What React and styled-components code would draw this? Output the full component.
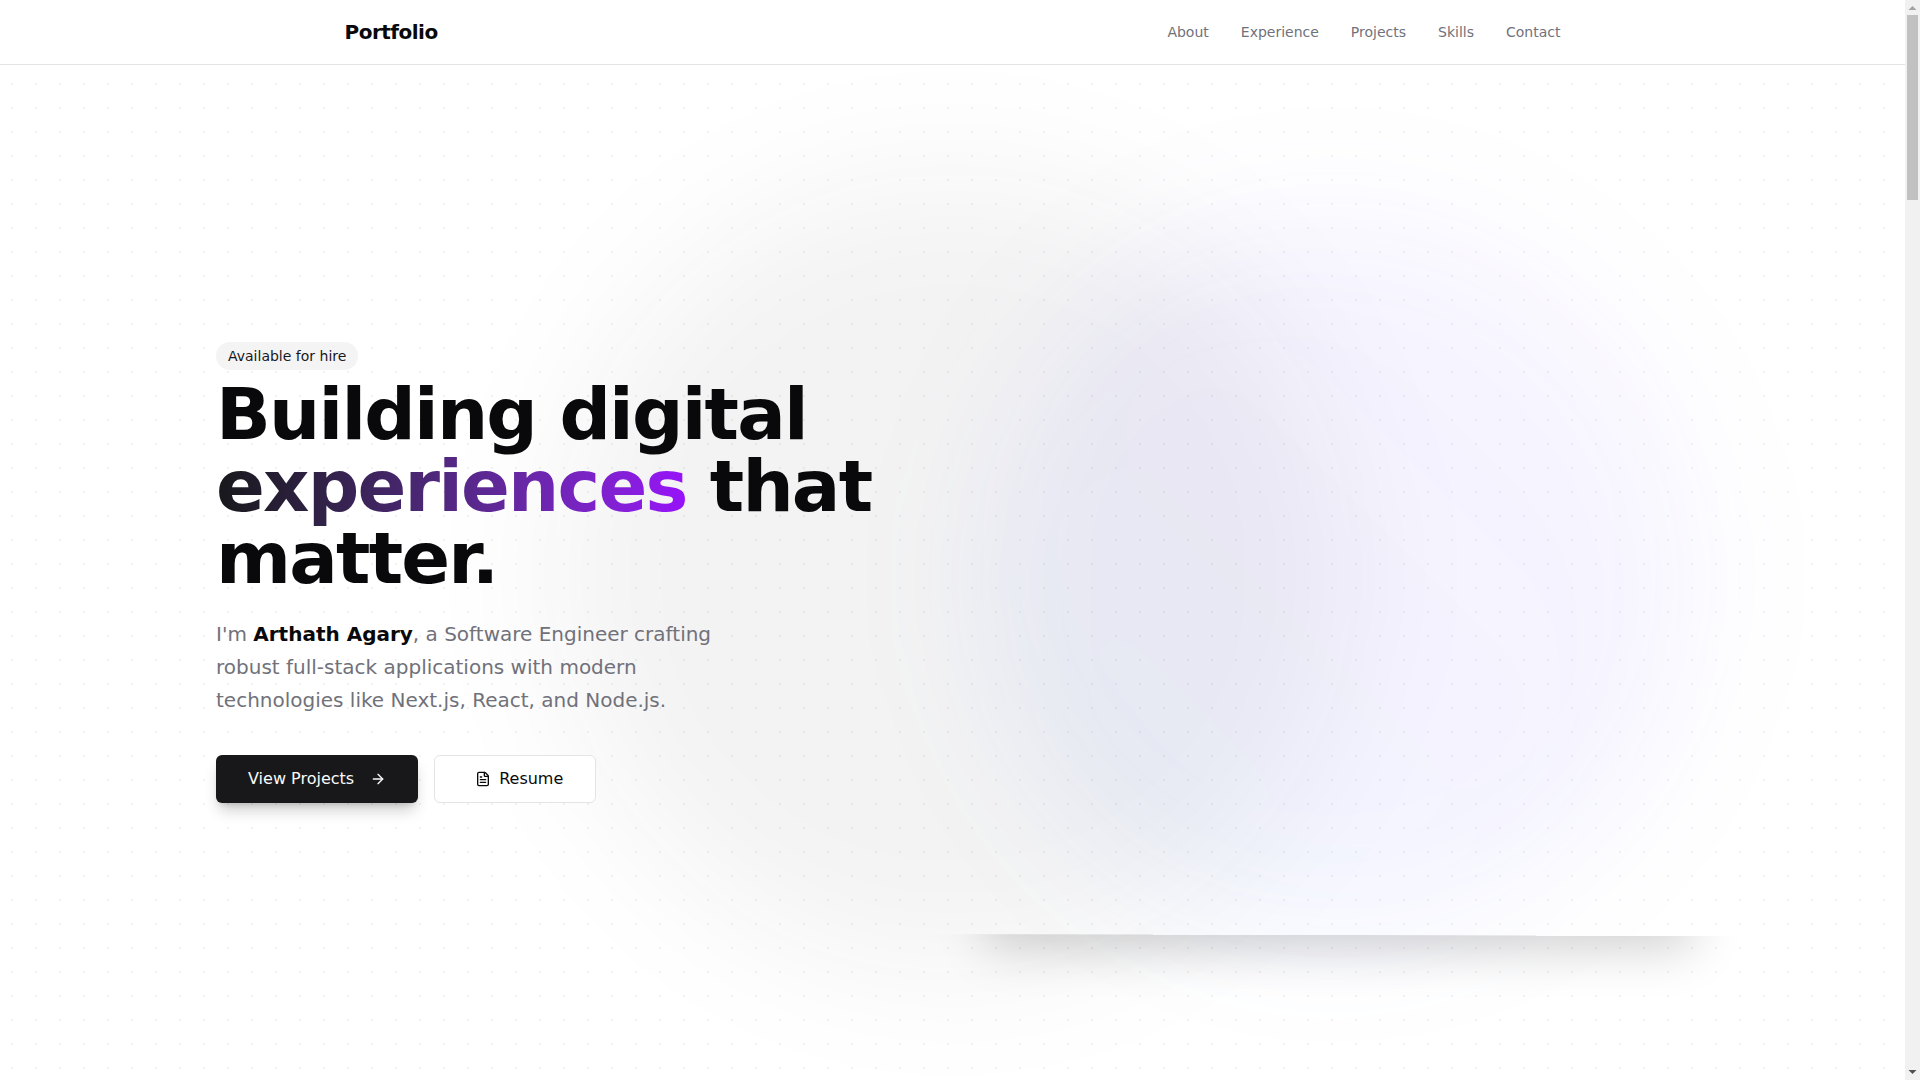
import styled, { createGlobalStyle } from "styled-components";
import { ArrowRight, FileText } from "lucide-react";

const GlobalStyle = createGlobalStyle`
  * {
    box-sizing: border-box;
  }

  body {
    margin: 0;
    background-color: #ffffff;
    color: #09090b;
    font-family: "DejaVu Sans", sans-serif;
    font-size: 16px;
    line-height: 24px;
  }
`;

const Page = styled.div`
  display: flex;
  height: 100vh;
`;

const Content = styled.div`
  position: relative;
  display: flex;
  flex: 1;
  flex-direction: column;
  min-width: 0;
  overflow: hidden;
`;

// dotted backdrop, it also runs behind the header
const Dots = styled.div`
  position: absolute;
  inset: 0;
  background-image: radial-gradient(#e4e4e7 1px, transparent 1px);
  background-size: 24px 24px;
  opacity: 0.5;
`;

const Header = styled.header`
  position: relative;
  z-index: 2;
  border-bottom: 1px solid #e4e4e7;
  background-color: #ffffff;
`;

const HeaderInner = styled.div`
  display: flex;
  align-items: center;
  justify-content: space-between;
  max-width: 1280px;
  height: 64px;
  margin: 0 auto;
  padding: 0 32px;
`;

const Brand = styled.a`
  color: #09090b;
  font-size: 20px;
  font-weight: bold;
  letter-spacing: -0.5px;
  line-height: 28px;
  text-decoration: none;
`;

const Nav = styled.nav`
  display: flex;
  gap: 32px;
`;

const NavLink = styled.a`
  color: #71717a;
  font-size: 14px;
  line-height: 20px;
  text-decoration: none;
`;

const Hero = styled.main`
  position: relative;
  display: flex;
  flex: 1;
  align-items: center;
`;

const Glow = styled.div`
  position: absolute;
  top: 50%;
  left: ${(props) => props.$left};
  width: ${(props) => props.$size}px;
  height: ${(props) => props.$size}px;
  border-radius: 50%;
  background: ${(props) => props.$fill};
  filter: blur(64px);
  transform: translate(-50%, -50%);
`;

const HeroGrid = styled.div`
  position: relative;
  display: grid;
  grid-template-columns: 1fr 1fr;
  gap: 48px;
  align-items: center;
  width: 100%;
  max-width: 1537px;
  margin: 0 auto;
  padding: 0 32px;
`;

const Intro = styled.div`
  display: flex;
  flex-direction: column;
  align-items: flex-start;
`;

const Badge = styled.span`
  padding: 4px 12px;
  border-radius: 14px;
  background-color: #f4f4f5;
  color: #18181b;
  font-size: 14px;
  line-height: 20px;
`;

const Title = styled.h1`
  margin: 8px 0 24px;
  font-size: 72px;
  font-weight: bold;
  letter-spacing: -1.8px;
  line-height: 72px;
`;

const Highlight = styled.span`
  background-image: linear-gradient(to right in oklab, #18181b, #9810fa);
  background-clip: text;
  color: transparent;
`;

const Lead = styled.p`
  max-width: 512px;
  margin: 0 0 38px;
  color: #71717a;
  font-size: 20px;
  line-height: 33px;

  strong {
    color: #09090b;
  }
`;

const Actions = styled.div`
  display: flex;
  gap: 16px;
`;

const Button = styled.button`
  display: flex;
  align-items: center;
  justify-content: center;
  gap: 8px;
  height: 48px;
  padding: 0 32px;
  border: ${(props) => (props.$primary ? "none" : "1px solid #e4e4e7")};
  border-radius: 6px;
  background-color: ${(props) => (props.$primary ? "#18181b" : "#ffffff")};
  color: ${(props) => (props.$primary ? "#fafafa" : "#09090b")};
  box-shadow: ${(props) =>
    props.$primary
      ? "0 10px 15px -3px rgba(0, 0, 0, 0.2), 0 4px 6px -4px rgba(0, 0, 0, 0.2)"
      : "none"};
  font-family: inherit;
  font-size: 16px;
  line-height: 24px;
  cursor: pointer;

  svg {
    width: 16px;
    height: 16px;
    margin-left: 8px;
  }
`;

const Stage = styled.div`
  align-self: stretch;
`;

// strip below the stage that keeps only the lower half of the shadow
const StageShadow = styled.div`
  position: absolute;
  top: calc(50% + 362px);
  left: calc(50% - 36px);
  width: 844px;
  height: 120px;
  overflow: hidden;
  transform: rotate(0.15deg);

  &::before {
    content: "";
    position: absolute;
    top: -300px;
    left: 56px;
    right: 56px;
    height: 300px;
    box-shadow: 0 25px 50px -12px rgba(0, 0, 0, 0.18);
  }
`;

const ScrollBar = styled.div`
  display: flex;
  flex-direction: column;
  align-items: center;
  justify-content: space-between;
  width: 15px;
  background-color: #f1f1f1;
`;

const ScrollThumb = styled.div`
  width: 11px;
  height: 185px;
  margin-bottom: auto;
  background-color: #c1c1c1;
`;

const ScrollArrow = styled.svg`
  display: block;
  width: 15px;
  height: 15px;
  fill: ${(props) => props.$color};
`;

const links = ["About", "Experience", "Projects", "Skills", "Contact"];

export default function App() {
  return (
    <>
      <GlobalStyle />
      <Page>
        <Content>
          <Dots />
          <Header>
            <HeaderInner>
              <Brand href="#home">Portfolio</Brand>
              <Nav>
                {links.map((name) => (
                  <NavLink key={name} href={`#${name.toLowerCase()}`}>
                    {name}
                  </NavLink>
                ))}
              </Nav>
            </HeaderInner>
          </Header>
          <Hero>
            <Glow $left="50%" $size={800} $fill="rgba(24, 24, 27, 0.05)" />
            <Glow
              $left="calc(50% + 384px)"
              $size={720}
              $fill="linear-gradient(to top right, rgba(43, 127, 255, 0.07), rgba(90, 75, 255, 0.065), rgba(130, 60, 255, 0.05))"
            />
            <StageShadow />
            <HeroGrid>
              <Intro>
                <Badge>Available for hire</Badge>
                <Title>
                  Building digital <Highlight>experiences</Highlight> that matter.
                </Title>
                <Lead>
                  I'm <strong>Arthath Agary</strong>, a Software Engineer crafting robust
                  full-stack applications with modern technologies like Next.js, React, and
                  Node.js.
                </Lead>
                <Actions>
                  <Button $primary>
                    View Projects
                    <ArrowRight />
                  </Button>
                  <Button>
                    <FileText />
                    Resume
                  </Button>
                </Actions>
              </Intro>
              <Stage />
            </HeroGrid>
          </Hero>
        </Content>
        <ScrollBar aria-hidden="true">
          <ScrollArrow $color="#a3a3a3" viewBox="0 0 15 15">
            <path d="M7.5 6 11.5 10h-8z" />
          </ScrollArrow>
          <ScrollThumb />
          <ScrollArrow $color="#505050" viewBox="0 0 15 15">
            <path d="M3.500 5h8l-4 4z" />
          </ScrollArrow>
        </ScrollBar>
      </Page>
    </>
  );
}
